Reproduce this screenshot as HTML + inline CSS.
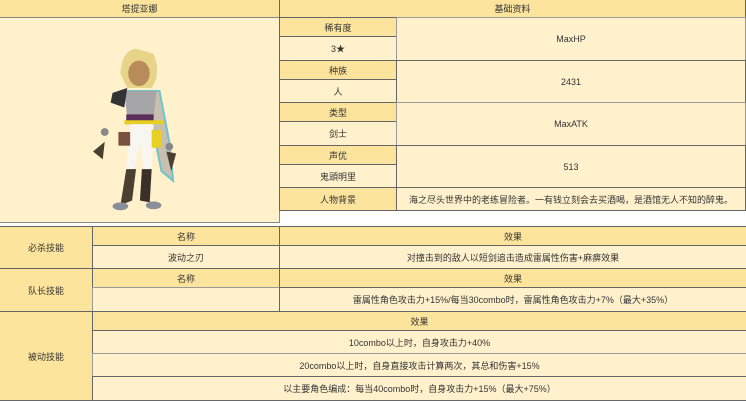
<!DOCTYPE html>
<html><head><meta charset="utf-8"><style>
body{margin:0;width:746px;height:400px;background:#fff;position:relative;overflow:hidden;font-family:"Liberation Sans","Noto Sans CJK SC",sans-serif;font-size:9px;color:#333}
.c{position:absolute;box-sizing:border-box;display:flex;align-items:center;justify-content:center;text-align:center;border:1px solid #666;margin:0}
.h{background:#fde49c}.l{background:#fff1cc}
</style></head><body>
<div class="c h" style="left:-1px;top:-1px;width:281px;height:19px">塔提亚娜</div>
<div class="c l" style="left:-1px;top:17px;width:281px;height:206px;border-color:#888"></div>
<svg style="position:absolute;left:82px;top:44px" width="110" height="176" viewBox="0 0 110 180">
<path d="M55 5 Q40 5 38 30 L45 45 L70 45 Q80 30 72 10 Z" fill="#e8d488"/>
<ellipse cx="57" cy="30" rx="11" ry="13" fill="#b98a5a"/>
<path d="M40 48 L78 48 L88 100 L92 140 L80 130 L70 80 Z" fill="#c9bfb0" stroke="#6cc4cc" stroke-width="2"/>
<path d="M42 48 L75 48 L72 75 L45 75 Z" fill="#a5a5a8"/>
<path d="M30 50 L45 45 L42 65 L28 60 Z" fill="#333"/>
<rect x="44" y="72" width="28" height="10" fill="#5a2f5a"/>
<rect x="42" y="78" width="40" height="4" fill="#e8d020"/>
<path d="M48 82 L72 82 L70 130 L62 130 L58 100 L52 130 L44 130 Z" fill="#f8f6f0"/>
<rect x="36" y="90" width="12" height="14" fill="#7a5040"/>
<rect x="70" y="88" width="10" height="18" fill="#e8d020"/>
<path d="M44 128 L54 128 L50 160 L38 165 Z" fill="#4a4030"/>
<path d="M60 128 L70 128 L68 162 L58 160 Z" fill="#3a3028"/>
<ellipse cx="38" cy="166" rx="8" ry="4" fill="#8a8e98"/>
<ellipse cx="72" cy="165" rx="8" ry="4" fill="#8a8e98"/>
<path d="M10 110 L22 100 L20 118 Z" fill="#4a4030"/>
<path d="M85 110 L95 112 L90 130 Z" fill="#4a4030"/>
<circle cx="22" cy="90" r="4" fill="#888"/><circle cx="88" cy="105" r="4" fill="#888"/>
</svg>
<div class="c h" style="left:279px;top:-1px;width:467px;height:19px">基础资料</div>
<div class="c h" style="left:279px;top:17px;width:118px;height:20px">稀有度</div>
<div class="c l" style="left:279px;top:36px;width:118px;height:25px">3★</div>
<div class="c h" style="left:279px;top:60px;width:118px;height:20px">种族</div>
<div class="c l" style="left:279px;top:79px;width:118px;height:24px">人</div>
<div class="c h" style="left:279px;top:102px;width:118px;height:20px">类型</div>
<div class="c l" style="left:279px;top:121px;width:118px;height:25px">剑士</div>
<div class="c h" style="left:279px;top:145px;width:118px;height:20px">声优</div>
<div class="c l" style="left:279px;top:164px;width:118px;height:24px">鬼頭明里</div>
<div class="c h" style="left:279px;top:187px;width:118px;height:24px">人物背景</div>
<div class="c l" style="left:396px;top:17px;width:350px;height:44px;border-color:#999">MaxHP</div>
<div class="c l" style="left:396px;top:60px;width:350px;height:43px">2431</div>
<div class="c l" style="left:396px;top:102px;width:350px;height:44px;border-color:#999">MaxATK</div>
<div class="c l" style="left:396px;top:145px;width:350px;height:43px">513</div>
<div class="c l" style="left:396px;top:187px;width:350px;height:24px">海之尽头世界中的老练冒险者。一有钱立刻会去买酒喝，是酒馆无人不知的醉鬼。</div>
<div class="c h" style="left:-1px;top:226px;width:94px;height:43px">必杀技能</div>
<div class="c h" style="left:92px;top:226px;width:188px;height:20px">名称</div>
<div class="c h" style="left:279px;top:226px;width:468px;height:20px">效果</div>
<div class="c l" style="left:92px;top:245px;width:188px;height:24px">波动之刃</div>
<div class="c l" style="left:279px;top:245px;width:468px;height:24px">对撞击到的敌人以短剑追击造成雷属性伤害+麻痹效果</div>
<div class="c h" style="left:-1px;top:268px;width:94px;height:44px">队长技能</div>
<div class="c h" style="left:92px;top:268px;width:188px;height:20px">名称</div>
<div class="c h" style="left:279px;top:268px;width:468px;height:20px">效果</div>
<div class="c l" style="left:92px;top:287px;width:188px;height:25px;border-color:#999"></div>
<div class="c l" style="left:279px;top:287px;width:468px;height:25px">雷属性角色攻击力+15%/每当30combo时，雷属性角色攻击力+7%（最大+35%）</div>
<div class="c h" style="left:-1px;top:311px;width:94px;height:90px">被动技能</div>
<div class="c h" style="left:92px;top:311px;width:655px;height:20px">效果</div>
<div class="c l" style="left:92px;top:330px;width:655px;height:24px">10combo以上时，自身攻击力+40%</div>
<div class="c l" style="left:92px;top:353px;width:655px;height:24px;border-color:#999">20combo以上时，自身直接攻击计算两次，其总和伤害+15%</div>
<div class="c l" style="left:92px;top:376px;width:655px;height:25px">以主要角色编成：每当40combo时，自身攻击力+15%（最大+75%）</div>
</body></html>
